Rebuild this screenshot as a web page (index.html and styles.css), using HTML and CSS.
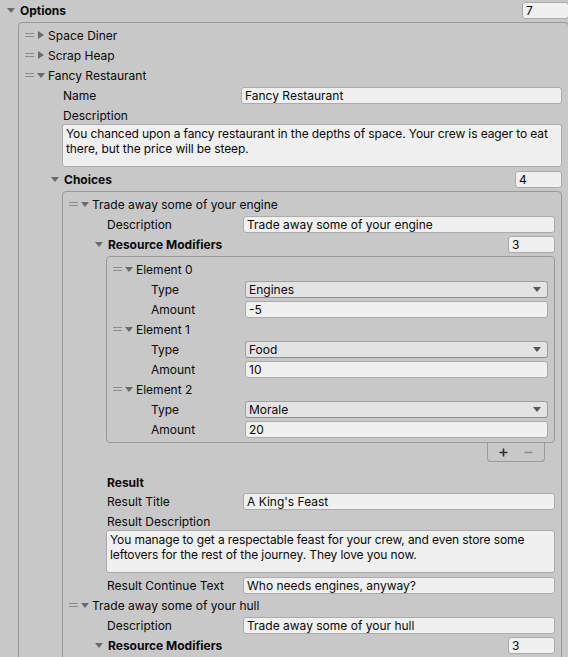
FILE: index.html
```html
<!DOCTYPE html>
<html>
<head>
<meta charset="utf-8">
<title>Options</title>
<link rel="stylesheet" href="styles.css">
</head>
<body>
<div class="list top">
  <div class="lhead">
    <svg class="fold" viewBox="0 0 8 8"><polygon points="0,2 8,2 4,7"/></svg>
    <span class="bold">Options</span>
    <div class="field count">7</div>
  </div>
  <div class="lbox lv1">
    <div class="ehead"><span class="handle"></span><svg class="fold" viewBox="0 0 8 8"><polygon points="1,0 7,4 1,8"/></svg><span class="etext">Space Diner</span></div>
    <div class="ehead"><span class="handle"></span><svg class="fold" viewBox="0 0 8 8"><polygon points="1,0 7,4 1,8"/></svg><span class="etext">Scrap Heap</span></div>
    <div class="ehead"><span class="handle"></span><svg class="fold" viewBox="0 0 8 8"><polygon points="0,2 8,2 4,7"/></svg><span class="etext">Fancy Restaurant</span></div>
    <div class="prop"><span class="lbl">Name</span><div class="field">Fancy Restaurant</div></div>
    <div class="plabel">Description</div>
    <div class="area">You chanced upon a fancy restaurant in the depths of space. Your crew is eager to eat<br>there, but the price will be steep.</div>

    <div class="list">
      <div class="lhead">
        <svg class="fold" viewBox="0 0 8 8"><polygon points="0,2 8,2 4,7"/></svg>
        <span class="bold">Choices</span>
        <div class="field count">4</div>
      </div>
      <div class="lbox lv2">
        <div class="ehead"><span class="handle"></span><svg class="fold" viewBox="0 0 8 8"><polygon points="0,2 8,2 4,7"/></svg><span class="etext">Trade away some of your engine</span></div>
        <div class="prop"><span class="lbl">Description</span><div class="field">Trade away some of your engine</div></div>

        <div class="list">
          <div class="lhead">
            <svg class="fold" viewBox="0 0 8 8"><polygon points="0,2 8,2 4,7"/></svg>
            <span class="bold">Resource Modifiers</span>
            <div class="field count">3</div>
          </div>
          <div class="lbox lv3">
            <div class="ehead"><span class="handle"></span><svg class="fold" viewBox="0 0 8 8"><polygon points="0,2 8,2 4,7"/></svg><span class="etext">Element 0</span></div>
            <div class="prop"><span class="lbl">Type</span><div class="field drop">Engines<svg class="arrow" viewBox="0 0 8 5"><polygon points="0,0 8,0 4,5"/></svg></div></div>
            <div class="prop"><span class="lbl">Amount</span><div class="field">-5</div></div>
            <div class="ehead"><span class="handle"></span><svg class="fold" viewBox="0 0 8 8"><polygon points="0,2 8,2 4,7"/></svg><span class="etext">Element 1</span></div>
            <div class="prop"><span class="lbl">Type</span><div class="field drop">Food<svg class="arrow" viewBox="0 0 8 5"><polygon points="0,0 8,0 4,5"/></svg></div></div>
            <div class="prop"><span class="lbl">Amount</span><div class="field">10</div></div>
            <div class="ehead"><span class="handle"></span><svg class="fold" viewBox="0 0 8 8"><polygon points="0,2 8,2 4,7"/></svg><span class="etext">Element 2</span></div>
            <div class="prop"><span class="lbl">Type</span><div class="field drop">Morale<svg class="arrow" viewBox="0 0 8 5"><polygon points="0,0 8,0 4,5"/></svg></div></div>
            <div class="prop"><span class="lbl">Amount</span><div class="field">20</div></div>
          </div>
          <div class="lfoot">
            <div class="foot">
              <svg class="plus" viewBox="0 0 9 9"><path d="M4.5 0.5V8.5M0.5 4.5H8.5"/></svg>
              <svg class="minus" viewBox="0 0 9 9"><path d="M0.5 4.5H8.5"/></svg>
            </div>
          </div>
        </div>

        <div class="hdr">Result</div>
        <div class="prop"><span class="lbl">Result Title</span><div class="field">A King's Feast</div></div>
        <div class="plabel">Result Description</div>
        <div class="area">You manage to get a respectable feast for your crew, and even store some<br>leftovers for the rest of the journey. They love you now.</div>
        <div class="prop gap"><span class="lbl">Result Continue Text</span><div class="field">Who needs engines, anyway?</div></div>

        <div class="ehead"><span class="handle"></span><svg class="fold" viewBox="0 0 8 8"><polygon points="0,2 8,2 4,7"/></svg><span class="etext">Trade away some of your hull</span></div>
        <div class="prop"><span class="lbl">Description</span><div class="field">Trade away some of your hull</div></div>
        <div class="list last">
          <div class="lhead">
            <svg class="fold" viewBox="0 0 8 8"><polygon points="0,2 8,2 4,7"/></svg>
            <span class="bold">Resource Modifiers</span>
            <div class="field count">3</div>
          </div>
        </div>
      </div>
    </div>
  </div>
</div>
</body>
</html>
```
FILE: styles.css
```css
html, body {
  overflow: hidden;
}
body {
  margin: 0;
  background: #c8c8c8;
  color: #090909;
  font-family: Inter, "Noto Sans", sans-serif;
  font-size: 12px;
  width: 568px;
  height: 657px;
}
.bold { font-weight: 700; }

.top { width: 569px; }

.lhead {
  display: flex;
  align-items: flex-start;
  height: 20px;
  padding-left: 27px;
  line-height: 21px;
}
.top > .lhead { padding-left: 7px; }

.fold {
  width: 8px;
  height: 8px;
  flex: 0 0 8px;
  margin-top: 6px;
  fill: #6a6a6a;
}
.lhead .fold { margin-right: 5px; }

.lbox {
  margin-top: 2px;
  margin-left: 38px;
  border: 1px solid #9a9a9a;
  border-radius: 4px;
  padding: 2px 6px 3px 5px;
}
.top > .lbox { margin-left: 18px; padding-bottom: 20px; }
.lv2 { padding-bottom: 20px; }

.ehead {
  display: flex;
  align-items: flex-start;
  height: 20px;
  line-height: 21px;
}
.handle {
  flex: 0 0 9px;
  width: 9px;
  height: 2px;
  margin-left: 1px;
  margin-top: 8px;
  border-top: 1px solid #8c8c8c;
  border-bottom: 1px solid #8c8c8c;
}
.ehead .fold { margin-left: 3px; }
.etext { margin-left: 3px; }

.prop {
  display: flex;
  align-items: flex-start;
  height: 20px;
  line-height: 21px;
  padding-left: 39px;
}
.lv1 > .prop > .lbl { flex: 0 0 178px; }
.lv2 > .prop > .lbl { flex: 0 0 136px; }
.lv3 > .prop > .lbl { flex: 0 0 94px; }

.field {
  box-sizing: border-box;
  height: 17px;
  margin-top: 2px;
  flex: 1 1 auto;
  min-width: 0;
  background: #f0f0f0;
  border: 1px solid #ababab;
  border-radius: 3px;
  padding: 0 3px;
  line-height: 16px;
  white-space: nowrap;
  overflow: hidden;
}
.field.count {
  margin-left: auto;
  width: 47px;
  flex: 0 0 47px;
}
.drop {
  display: flex;
  justify-content: space-between;
  align-items: center;
  background: #e3e3e3;
  border-color: #a0a0a0;
  border-bottom-color: #8e8e8e;
}
.arrow {
  width: 8px;
  height: 5px;
  margin-right: 3px;
  fill: #575757;
}

.plabel {
  height: 18px;
  line-height: 19px;
  margin-top: 1px;
  padding-left: 39px;
}
.area {
  box-sizing: border-box;
  margin-left: 38px;
  height: 43px;
  background: #f0f0f0;
  border: 1px solid #ababab;
  border-radius: 3px;
  padding: 1px 3px;
  line-height: 15px;
  letter-spacing: -0.1px;
  white-space: nowrap;
  overflow: hidden;
}
.area + .list { margin-top: 2px; }
.prop.gap { margin-top: 2px; }

.lfoot {
  display: flex;
  justify-content: flex-end;
}
.foot {
  box-sizing: border-box;
  width: 58px;
  height: 19px;
  margin-right: 10px;
  border: 1px solid #9a9a9a;
  border-top: none;
  border-radius: 0 0 4px 4px;
  display: flex;
  align-items: flex-start;
  padding-left: 11px;
}
.plus, .minus {
  width: 9px;
  height: 9px;
  margin-top: 5px;
  fill: none;
}
.plus { stroke: #2e2e2e; stroke-width: 1.6; }
.minus { stroke: #8a8a8a; stroke-width: 1.4; margin-left: 16px; }

.hdr {
  margin-top: 11px;
  height: 18px;
  line-height: 19px;
  padding-left: 39px;
  font-weight: 700;
}
```
